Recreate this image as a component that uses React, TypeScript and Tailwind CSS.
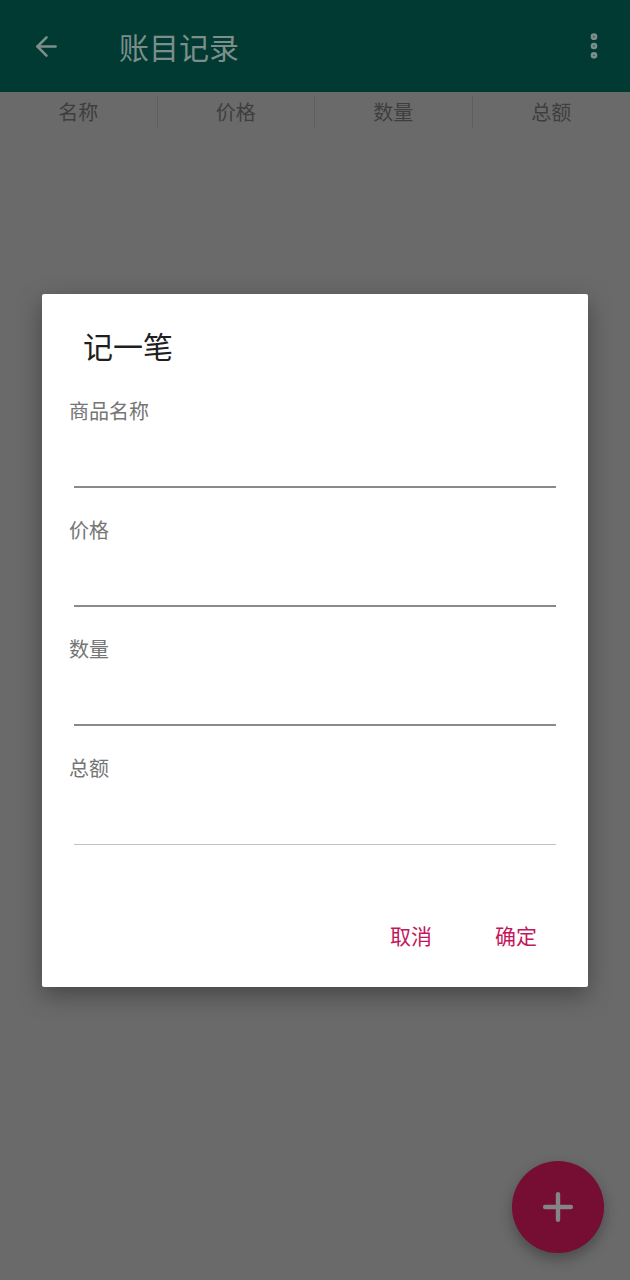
import { ArrowLeft, MoreVertical, Plus } from "lucide-react";

const columns = ["名称", "价格", "数量", "总额"];
const fields = ["商品名称", "价格", "数量", "总额"];

export default function App() {
  return (
    <div
      className="relative w-[630px] h-[1280px] overflow-hidden bg-[#6a6a6a]"
      style={{ fontFamily: '"Noto Sans CJK SC", "Noto Sans", sans-serif' }}
    >
      {/* Toolbar */}
      <header className="flex items-center h-[92px] bg-[#003a33] text-[#7c8e89]">
        <ArrowLeft className="ml-[31px] w-[31px] h-[31px]" strokeWidth={2} />
        <h1 className="ml-[57px] text-[30px] leading-none">账目记录</h1>
        <MoreVertical className="ml-auto mr-[20px] w-[32px] h-[32px]" strokeWidth={3} />
      </header>

      {/* Column headers */}
      <div className="grid grid-cols-4 h-[40px]">
        {columns.map((c, i) => (
          <div
            key={c}
            className={`flex items-center justify-center text-[20px] text-[#3e3e3e] my-[4px] ${
              i < 3 ? "border-r border-[#5f5f5f]" : ""
            }`}
          >
            {c}
          </div>
        ))}
      </div>

      {/* Dialog */}
      <div className="absolute inset-0 flex items-center justify-center">
        <div className="w-[546px] h-[693px] bg-white rounded-[2px] shadow-[0_8px_24px_rgba(0,0,0,0.35)] flex flex-col pt-[33px]">
          <h2 className="ml-[41px] text-[30px] leading-[36px] text-[#1f1f1f]">记一笔</h2>
          <div className="mt-[36px] flex flex-col">
            {fields.map((f, i) => (
              <div key={f} className={i < 3 ? "mb-[30px]" : ""}>
                <div className="ml-[27px] text-[20px] leading-[24px] text-[#757575]">{f}</div>
                <div
                  className={`mx-[32px] h-[65px] ${
                    i < 3 ? "border-b-2 border-[#8a8a8a]" : "border-b-[1.5px] border-[#c2c2c2]"
                  }`}
                />
              </div>
            ))}
          </div>
          <div className="mt-[78px] flex justify-end gap-[63px] pr-[51px] text-[21px] leading-[24px] text-[#c2185b]">
            <button>取消</button>
            <button>确定</button>
          </div>
        </div>
      </div>

      {/* FAB */}
      <button className="absolute right-[26px] bottom-[27px] w-[92px] h-[92px] rounded-full bg-[#760d32] flex items-center justify-center shadow-[0_6px_14px_rgba(0,0,0,0.3)]">
        <Plus className="w-[44px] h-[44px] text-[#858585]" strokeWidth={2.4} />
      </button>
    </div>
  );
}
